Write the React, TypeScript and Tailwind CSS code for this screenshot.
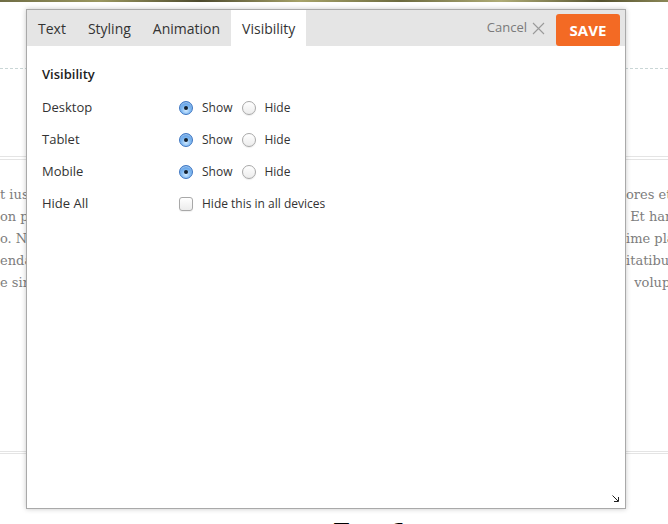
import React from "react";

const leftBits = ["t iust", "on pr", "o. Na", "enda", "e sin"];
const rightBits = ["ores et c", " Et haru", "ime pla", "itatibus", "  volupta"];

function Radio({ checked }: { checked: boolean }) {
  if (checked) {
    return (
      <span className="flex h-[14px] w-[14px] shrink-0 items-center justify-center rounded-full border border-[#3d76c2] bg-[radial-gradient(circle_at_50%_70%,#d4ebff_0%,#86bdf3_40%,#3580d8_100%)] shadow-[inset_0_1px_1px_rgba(255,255,255,0.5)]">
        <span className="block h-[4px] w-[4px] rounded-full bg-[#14202e]" />
      </span>
    );
  }
  return (
    <span className="block h-[14px] w-[14px] shrink-0 rounded-full border border-[#a8a8a8] bg-[linear-gradient(#ffffff,#ececec)] shadow-[0_1px_1px_rgba(0,0,0,0.08)]" />
  );
}

function ShowHideRow({ label }: { label: string }) {
  return (
    <div className="flex h-8 items-center">
      <span className="w-[137px]">{label}</span>
      <Radio checked />
      <span className="ml-[9px] text-[12px]">Show</span>
      <span className="ml-[10px] block">
        <Radio checked={false} />
      </span>
      <span className="ml-[8px] text-[12px]">Hide</span>
    </div>
  );
}

export default function App() {
  return (
    <div className="relative h-[524px] w-[668px] overflow-hidden bg-white font-['Open_Sans',sans-serif]">
      {/* page behind the editor */}
      <div className="h-[2px] bg-[linear-gradient(90deg,#6f6d45,#9a9760_15%,#4d4a2e_30%,#a7a36a_45%,#6c6a3f_60%,#b0ad78_75%,#55522f_90%,#8b8757)]" />
      <div className="mt-[66px] border-t border-dashed border-[#c9d6d6]" />
      <div className="mt-[87px] h-[4px] border-y border-[#e4e4e4]" />
      <div className="mt-6 grid grid-cols-[26px_600px_42px] font-['DejaVu_Serif',serif] text-[13px] leading-[22px] text-[#7d7d7d]">
        <div className="overflow-hidden whitespace-nowrap">
          {leftBits.map((t) => (
            <div key={t}>{t}</div>
          ))}
        </div>
        <div />
        <div className="overflow-hidden whitespace-pre">
          {rightBits.map((t) => (
            <div key={t}>{t}</div>
          ))}
        </div>
      </div>
      <div className="mt-[157px] h-[3px] border-y border-[#e4e4e4]" />
      <div className="mt-[67px] pl-[334px] font-['DejaVu_Sans',sans-serif] text-[22px] font-bold leading-none text-black">
        Test 1
      </div>

      {/* editor dialog */}
      <div className="absolute left-[26px] top-[9px] flex h-[500px] w-[600px] flex-col border border-[#a9a9a9] bg-white shadow-[0_0_5px_rgba(0,0,0,0.22)]">
        <div className="flex h-[36px] shrink-0 bg-[#e5e5e5] text-[14px] text-[#333]">
          {["Text", "Styling", "Animation", "Visibility"].map((tab) => (
            <div
              key={tab}
              className={`flex items-center px-[11px] ${tab === "Visibility" ? "bg-white" : ""}`}
            >
              {tab}
            </div>
          ))}
          <div className="ml-auto flex items-center text-[13px] text-[#7a7a7a]">
            Cancel
            <svg className="ml-[5px] h-[13px] w-[13px]" viewBox="0 0 13 13" fill="none" stroke="#9a9a9a" strokeWidth="1.1">
              <path d="M1 1L12 12M12 1L1 12" />
            </svg>
          </div>
          <button
            type="button"
            className="ml-[11px] mr-[5px] flex h-[32px] w-[64px] items-center justify-center self-end rounded-[3px] bg-[#f36a24] text-[15px] font-bold text-white"
          >
            SAVE
          </button>
        </div>

        <div className="relative flex-1 px-[15px] pt-[18px] text-[13px] text-[#333]">
          <div className="mb-[8px] text-[13px] font-semibold leading-5 text-[#222]">Visibility</div>
          <ShowHideRow label="Desktop" />
          <ShowHideRow label="Tablet" />
          <ShowHideRow label="Mobile" />
          <div className="flex h-8 items-center">
            <span className="w-[137px]">Hide All</span>
            <span className="block h-[14px] w-[14px] shrink-0 rounded-[3px] border border-[#a8a8a8] bg-[linear-gradient(#ffffff,#ececec)] shadow-[0_1px_1px_rgba(0,0,0,0.06)]" />
            <span className="ml-[9px] text-[12px]">Hide this in all devices</span>
          </div>

          <svg className="absolute bottom-[6px] right-[6px] h-[7px] w-[7px]" viewBox="0 0 7 7" fill="none" stroke="#222" strokeWidth="1">
            <path d="M0.5 0.5L6 6M6.5 2V6.5H2" />
          </svg>
        </div>
      </div>
    </div>
  );
}
